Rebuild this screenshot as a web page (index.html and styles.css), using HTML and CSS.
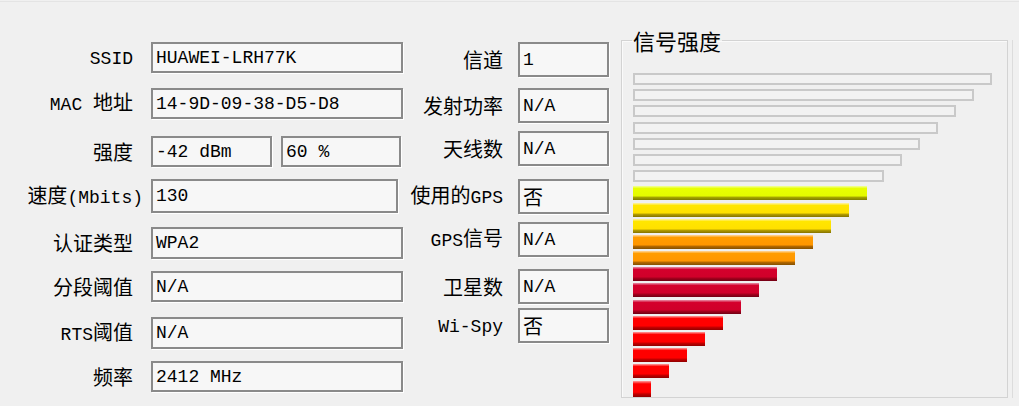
FILE: index.html
```html
<!DOCTYPE html>
<html lang="zh-CN">

<head>
    <meta charset="UTF-8">
    <title>网络详情</title>
    <link rel="stylesheet" href="styles.css">
</head>

<body>
    <div class="dialog">
        <!-- left column -->
        <div class="col left">
            <div class="field"><label><span class="en">SSID</span></label><div class="box">HUAWEI-LRH77K</div></div>
            <div class="field"><label><span class="en">MAC </span>地址</label><div class="box">14-9D-09-38-D5-D8</div></div>
            <div class="field">
                <label>强度</label>
                <div class="box dbm">-42 dBm</div>
                <div class="box pct">60 %</div>
            </div>
            <div class="field tall"><label class="wide">速度<span class="en">(Mbits)</span></label><div class="box speed">130</div></div>
            <div class="field auth"><label>认证类型</label><div class="box">WPA2</div></div>
            <div class="field"><label>分段阈值</label><div class="box">N/A</div></div>
            <div class="field auth"><label><span class="en">RTS</span>阈值</label><div class="box">N/A</div></div>
            <div class="field"><label>频率</label><div class="box">2412 MHz</div></div>
        </div>

        <!-- middle column -->
        <div class="col mid">
            <div class="field"><label>信道</label><div class="box">1</div></div>
            <div class="field"><label>发射功率</label><div class="box">N/A</div></div>
            <div class="field"><label>天线数</label><div class="box">N/A</div></div>
            <div class="field"><label>使用的<span class="en">GPS</span></label><div class="box"><span class="cjk">否</span></div></div>
            <div class="field"><label><span class="en">GPS</span>信号</label><div class="box">N/A</div></div>
            <div class="field"><label>卫星数</label><div class="box">N/A</div></div>
            <div class="field"><label><span class="en">Wi-Spy</span></label><div class="box"><span class="cjk">否</span></div></div>
        </div>

        <!-- signal meter -->
        <fieldset class="signal">
            <legend>信号强度</legend>
            <div class="bars">
                <div class="bar off" style="width: 359px"></div>
                <div class="bar off" style="width: 341px"></div>
                <div class="bar off" style="width: 323px"></div>
                <div class="bar off" style="width: 305px"></div>
                <div class="bar off" style="width: 287px"></div>
                <div class="bar off" style="width: 269px"></div>
                <div class="bar off" style="width: 251px"></div>
                <div class="bar on lime" style="width: 234px"></div>
                <div class="bar on yellow" style="width: 216px"></div>
                <div class="bar on yellow" style="width: 198px"></div>
                <div class="bar on orange" style="width: 180px"></div>
                <div class="bar on orange" style="width: 162px"></div>
                <div class="bar on crimson" style="width: 144px"></div>
                <div class="bar on crimson" style="width: 126px"></div>
                <div class="bar on crimson" style="width: 108px"></div>
                <div class="bar on red" style="width: 90px"></div>
                <div class="bar on red" style="width: 72px"></div>
                <div class="bar on red" style="width: 54px"></div>
                <div class="bar on red" style="width: 36px"></div>
                <div class="bar on red last" style="width: 18px"></div>
            </div>
        </fieldset>

        <div class="edge"></div>
    </div>
</body>

</html>
```

FILE: styles.css
```css
body {
    margin: 0;
    background-color: #f0f0f0;
    font-family: "Noto Sans CJK SC", sans-serif;
    color: #000;
}

.dialog {
    display: flex;
    align-items: flex-start;
    margin-top: 1px;
    border-top: 1px solid #e4e4e4;
    height: 403px;
    box-sizing: border-box;
}

.en {
    font-family: "Liberation Mono", monospace;
    font-size: 18px;
}

.cjk {
    font-family: "Noto Sans CJK SC", sans-serif;
    font-size: 20px;
}

.col {
    display: grid;
    align-items: start;
    padding-top: 40px;
}

.left {
    width: 403px;
    grid-template-rows: 46px 48px 43px 48px 44px 46px 44px 31px;
}

.mid {
    width: 206px;
    grid-template-rows: 46px 43px 48px 43px 47px 39px 36px;
}

.field {
    display: flex;
    align-items: center;
    height: 31px;
}

.field label {
    flex: none;
    font-size: 20px;
    line-height: 26px;
    text-align: right;
    white-space: nowrap;
}

.left .field label {
    width: 133px;
    margin-right: 18px;
}

.left .field label.wide {
    width: 143px;
    margin-right: 8px;
}

.mid .field {
    height: 35px;
}

.mid .field label {
    width: 100px;
    margin-right: 15px;
}

.field.tall {
    height: 34px;
}

.field.auth {
    height: 32px;
}

.box {
    display: flex;
    align-items: center;
    box-sizing: border-box;
    width: 252px;
    height: 100%;
    padding-left: 3px;
    border: 2px solid #8a8a8a;
    background-color: #f7f7f7;
    box-shadow: 1px 1px 0 #ffffff;
    font-family: "Liberation Mono", monospace;
    font-size: 18px;
    white-space: nowrap;
    overflow: hidden;
}

.box.dbm {
    width: 121px;
}

.box.pct {
    width: 120px;
    margin-left: 9px;
}

.box.speed {
    width: 247px;
}

.mid .box {
    width: 91px;
}

.signal {
    margin: 25px 0 0 12px;
    padding: 20px 0 0 11px;
    width: 387px;
    height: 371px;
    box-sizing: border-box;
    border: 1px solid #d3d3d3;
    box-shadow: inset 1px 1px 0 #fafafa;
}

.signal legend {
    padding: 0 1px;
    margin-left: -1px;
    font-size: 22px;
    line-height: 26px;
}

.bars {
    display: flex;
    flex-direction: column;
}

.bar {
    box-sizing: border-box;
    height: 12px;
    margin-bottom: 4.2px;
}

.bar.off {
    border: 2px solid #c9c9c9;
    background-color: #f2f2f2;
}

.bar.on {
    height: 14px;
    margin-bottom: 2.2px;
}

.bar.last {
    height: 16px;
    margin-bottom: 0;
}

.lime {
    background: linear-gradient(#f2ffa0 0, #e8ff00 18%, #e4fb00 70%, #a3a300 82%, #7c7c00 100%);
}

.yellow {
    background: linear-gradient(#fff3a8 0, #ffe600 18%, #ffe000 70%, #b09a00 82%, #857300 100%);
}

.orange {
    background: linear-gradient(#ffd8a0 0, #ff9c00 18%, #ff9600 70%, #b06600 82%, #845000 100%);
}

.crimson {
    background: linear-gradient(#e890a8 0, #d4002c 18%, #d0002a 70%, #a0001c 82%, #700014 100%);
}

.red {
    background: linear-gradient(#ffa0a0 0, #ff0000 18%, #ff0000 70%, #c00000 82%, #900000 100%);
}

.edge {
    margin: 38px 0 0 4px;
    width: 0;
    height: 358px;
    border-left: 1px solid #dcdcdc;
}
```
